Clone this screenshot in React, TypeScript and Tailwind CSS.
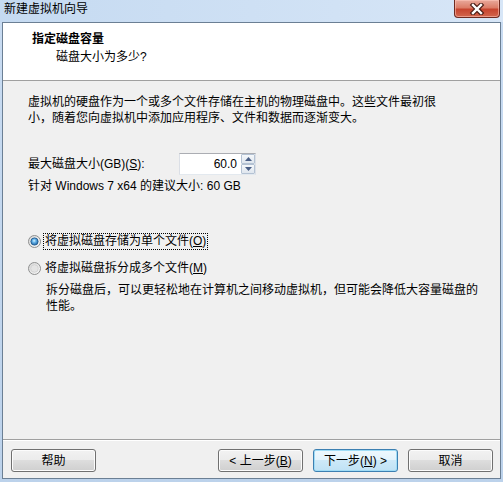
import React from "react";

function CloseBtn() {
  return (
    <div className="w-[46px] h-[18px] mr-[3px] rounded-b-[4px] border border-t-0 border-[#6e2a20] bg-[linear-gradient(#e9a99b_0%,#dc7d68_45%,#c7452f_55%,#d2664d_100%)] shadow-[inset_0_0_0_1px_rgba(255,200,190,0.55)] flex items-center justify-center">
      <svg width="16" height="12" viewBox="0 0 16 12">
        <path d="M4 2 L12 10 M12 2 L4 10" stroke="#4a1d16" strokeWidth="4.6" strokeLinecap="square" />
        <path d="M4 2 L12 10 M12 2 L4 10" stroke="#ffffff" strokeWidth="2.4" strokeLinecap="square" />
      </svg>
    </div>
  );
}

function Radio({ checked }: { checked: boolean }) {
  return (
    <svg width="13" height="13" viewBox="0 0 13 13" className="shrink-0">
      <defs>
        <linearGradient id={checked ? "rbgA" : "rbgB"} x1="0" y1="0" x2="1" y2="1">
          <stop offset="0" stopColor="#d6d6d6" />
          <stop offset="1" stopColor="#fbfbfb" />
        </linearGradient>
        <radialGradient id="rdot" cx="45%" cy="40%" r="65%">
          <stop offset="0" stopColor="#d9f2ff" />
          <stop offset="0.35" stopColor="#6ab8ec" />
          <stop offset="1" stopColor="#1a5a9c" />
        </radialGradient>
      </defs>
      <circle cx="6.5" cy="6.5" r="6" fill={`url(#${checked ? "rbgA" : "rbgB"})`} stroke="#8e8f8f" strokeWidth="1" />
      {checked ? (
        <circle cx="6.5" cy="6.5" r="3.6" fill="url(#rdot)" stroke="#1f5c92" strokeWidth="0.9" />
      ) : (
        <circle cx="6.5" cy="6.5" r="3.8" fill="#e4e4e4" stroke="#c8c8c8" strokeWidth="0.6" />
      )}
    </svg>
  );
}

function SpinBtn({ up }: { up: boolean }) {
  return (
    <div className="h-[10px] w-[14px] border border-[#b4c2d3] rounded-[1px] bg-[linear-gradient(#f5f8fb,#dfe6ee)] flex items-center justify-center">
      <svg width="7" height="4" viewBox="0 0 7 4">
        {up ? <path d="M0 4 L3.5 0 L7 4 Z" fill="#4a5f86" /> : <path d="M0 0 L3.5 4 L7 0 Z" fill="#4a5f86" />}
      </svg>
    </div>
  );
}

function Btn({ children, focused }: { children: React.ReactNode; focused?: boolean }) {
  return (
    <div
      className={
        focused
          ? "w-[85px] h-[23px] rounded-[3px] border border-[#3c7fb1] bg-[linear-gradient(#eef8fd_0%,#e2f3fc_50%,#cde9f8_50%,#bfe2f5_100%)] shadow-[inset_0_0_0_1px_#9fdcf6] flex items-center justify-center leading-[16px]"
          : "w-[85px] h-[23px] rounded-[3px] border border-[#707070] bg-[linear-gradient(#f2f2f2_0%,#ebebeb_50%,#dddddd_50%,#cfcfcf_100%)] shadow-[inset_0_0_0_1px_#fcfcfc] flex items-center justify-center leading-[16px]"
      }
    >
      {children}
    </div>
  );
}

export default function App() {
  return (
    <div className="w-[503px] h-[482px] flex flex-col bg-[linear-gradient(#c9dcf2,#bcd2eb)] font-['Liberation_Sans','Noto_Sans_CJK_SC',sans-serif] text-[12px] text-black overflow-hidden">
      <div className="h-[22px] flex items-start justify-between bg-[linear-gradient(90deg,#c5daf1,#d7e6f7)]">
        <div className="pl-[4px] pt-[1px] leading-[16px]">新建虚拟机向导</div>
        <CloseBtn />
      </div>
      <div className="mx-[2px] mb-[3px] flex-1 border border-[#6b7f94] bg-[#f0f0f0] flex flex-col">
        <div className="h-[58px] bg-white border-b border-[#a0a0a0] pt-[8px]">
          <div className="pl-[29px] leading-[16px] font-bold">指定磁盘容量</div>
          <div className="pl-[53px] mt-[2px] leading-[16px]">磁盘大小为多少?</div>
        </div>
        <div className="flex-1 flex flex-col pl-[25px] pr-[20px] pt-[13px]">
          <div className="leading-[16px]">
            <div>虚拟机的硬盘作为一个或多个文件存储在主机的物理磁盘中。这些文件最初很</div>
            <div>小，随着您向虚拟机中添加应用程序、文件和数据而逐渐变大。</div>
          </div>
          <div className="mt-[27px] flex items-center h-[22px]">
            <div className="w-[151px] leading-[16px]">
              最大磁盘大小(GB)(<span className="underline">S</span>):
            </div>
            <div className="w-[77px] h-[22px] border border-[#abadb3] border-x-[#dbdfe6] border-b-[#e3e9ef] bg-white flex items-center">
              <div className="flex-1 text-right pr-[4px] leading-[16px]">60.0</div>
              <div className="flex flex-col">
                <SpinBtn up />
                <SpinBtn up={false} />
              </div>
            </div>
          </div>
          <div className="mt-[3px] leading-[16px]">针对 Windows 7 x64 的建议大小: 60 GB</div>
          <div className="mt-[39px] flex items-center h-[17px]">
            <Radio checked />
            <div className="ml-[2px] border border-dotted border-black px-[1px] leading-[15px]">
              将虚拟磁盘存储为单个文件(<span className="underline">O</span>)
            </div>
          </div>
          <div className="mt-[10px] flex items-center h-[17px]">
            <Radio checked={false} />
            <div className="ml-[2px] border border-transparent px-[1px] leading-[15px]">
              将虚拟磁盘拆分成多个文件(<span className="underline">M</span>)
            </div>
          </div>
          <div className="mt-[5px] ml-[18px] leading-[16px]">
            <div>拆分磁盘后，可以更轻松地在计算机之间移动虚拟机，但可能会降低大容量磁盘的</div>
            <div>性能。</div>
          </div>
        </div>
        <div className="h-[2px] border-t border-[#a0a0a0] border-b border-b-white" />
        <div className="h-[37px] pt-[8px] flex items-start pl-[8px] pr-[7px]">
          <Btn>帮助</Btn>
          <div className="flex-1" />
          <div className="flex gap-[10px]">
            <Btn>
              &lt; 上一步(<span className="underline">B</span>)
            </Btn>
            <Btn focused>
              下一步(<span className="underline">N</span>) &gt;
            </Btn>
            <Btn>取消</Btn>
          </div>
        </div>
      </div>
    </div>
  );
}
